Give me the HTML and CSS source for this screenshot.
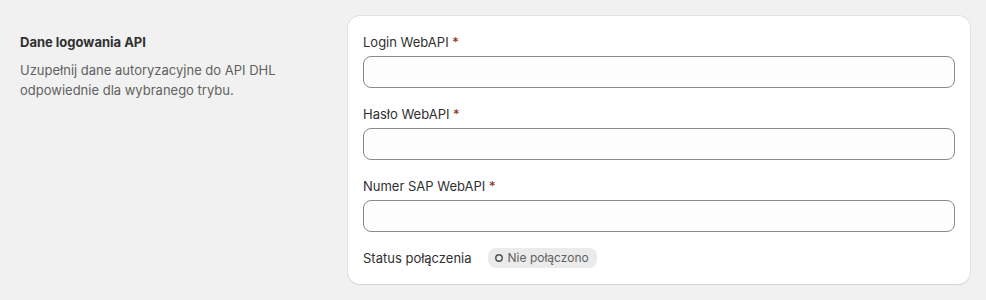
FILE: index.html
```html
<!DOCTYPE html>
<html lang="pl">
<head>
    <meta charset="UTF-8">
    <meta name="viewport" content="width=device-width, initial-scale=1.0">
    <title>Dane logowania API</title>
    <link rel="stylesheet" href="styles.css">
</head>
<body>
    <div class="layout">
        <!-- Section description -->
        <div class="section-info">
            <h2>Dane logowania API</h2>
            <p>Uzupełnij dane autoryzacyjne do API DHL odpowiednie dla wybranego trybu.</p>
        </div>

        <!-- Credentials card -->
        <div class="card">
            <div class="field">
                <label for="login">Login WebAPI <span class="req">*</span></label>
                <input type="text" id="login">
            </div>
            <div class="field">
                <label for="password">Hasło WebAPI <span class="req">*</span></label>
                <input type="password" id="password">
            </div>
            <div class="field">
                <label for="sap">Numer SAP WebAPI <span class="req">*</span></label>
                <input type="text" id="sap">
            </div>
            <div class="status-row">
                <span>Status połączenia</span>
                <span class="badge">
                    <svg width="10" height="10" viewBox="0 0 10 10"><circle cx="5" cy="5" r="3.2" fill="none" stroke="#4a4a4a" stroke-width="1.4"/></svg>
                    Nie połączono
                </span>
            </div>
        </div>
    </div>
</body>
</html>
```

FILE: styles.css
```css
/* Global Styles */
body {
    margin: 0;
    background: #f1f1f1;
    font-family: 'Inter', 'Noto Sans', sans-serif;
    font-size: 13px;
    line-height: 20px;
    color: #303030;
}

.layout {
    display: grid;
    grid-template-columns: 312px 1fr;
    gap: 20px;
    padding: 16px;
}

/* Left column */
.section-info {
    padding: 16px 0 0 4px;
}

.section-info h2 {
    margin: 0;
    font-size: 13px;
    font-weight: 650;
    line-height: 20px;
}

.section-info p {
    margin: 8px 0 0;
    color: #616161;
    max-width: 270px;
}

/* Card */
.card {
    background: #fff;
    border-radius: 12px;
    padding: 16px 15px;
    box-shadow: 0 1px 0 rgba(26, 26, 26, 0.07), 0 0 0 1px rgba(26, 26, 26, 0.07);
    display: flex;
    flex-direction: column;
    gap: 16px;
}

.field {
    display: flex;
    flex-direction: column;
    gap: 4px;
}

.field label {
    display: block;
}

.req {
    color: #8e1f0b;
}

.field input {
    height: 32px;
    box-sizing: border-box;
    border: 1px solid #8a8a8a;
    border-radius: 8px;
    background: #fdfdfd;
    font: inherit;
    padding: 0 12px;
    margin: 0;
    outline: none;
}

/* Status */
.status-row {
    display: flex;
    align-items: center;
    gap: 16px;
}

.badge {
    display: inline-flex;
    align-items: center;
    gap: 4px;
    height: 20px;
    padding: 0 8px 0 6px;
    border-radius: 8px;
    background: #ebebeb;
    color: #616161;
    font-size: 12px;
}
```
